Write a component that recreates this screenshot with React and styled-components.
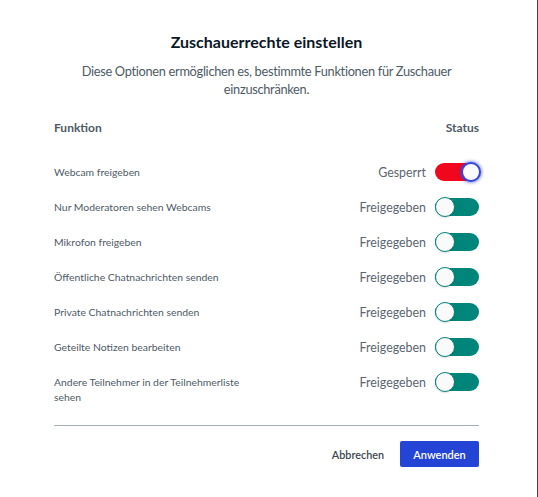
import React from 'react';
import styled, { createGlobalStyle } from 'styled-components';

const Global = createGlobalStyle`
  html, body {
    margin: 0;
    padding: 0;
    background: #ffffff;
  }
  * { box-sizing: border-box; }
`

const Page = styled.div`
  width: 538px;
  height: 497px;
  background: #ffffff;
  border-right: 1px solid #3a4047;
  font-family: "Source Sans Pro", Lato, "Liberation Sans", sans-serif;
  color: #4e5a66;
  padding: 31px 58px 0 54px;
  display: flex;
  flex-direction: column;
`

const Title = styled.h2`
  margin: 0;
  text-align: center;
  font-size: 16px;
  font-weight: 700;
  color: #0b1727;
  line-height: 22px;
`

const Subtitle = styled.p`
  margin: 9px 0 0;
  text-align: center;
  font-size: 12.8px;
  letter-spacing: -0.3px;
  line-height: 18px;
  color: #4e5a66;
`

const HeaderRow = styled.div`
  display: flex;
  justify-content: space-between;
  margin-top: 21px;
  font-size: 12px;
  font-weight: 700;
  color: #4e5a66;
  line-height: 18px;
`

const List = styled.div`
  margin-top: 25px;
  display: flex;
  flex-direction: column;
  gap: 15px;
`

const Row = styled.div`
  display: flex;
  align-items: flex-start;
  justify-content: space-between;
  min-height: 20px;
`

const Label = styled.div`
  font-size: 10.4px;
  line-height: 15px;
  padding-top: 3px;
  max-width: 200px;
  color: #4e5a66;
`

const StatusWrap = styled.div`
  display: flex;
  align-items: center;
  gap: 9px;
  padding-top: 1px;
`

const StatusText = styled.span`
  font-size: 12.4px;
  color: #5b6570;
`

const Track = styled.div`
  position: relative;
  width: 44px;
  height: 18px;
  border-radius: 9px;
  background: ${p => (p.$on ? '#f0061d' : '#00857a')};
`

const Knob = styled.div`
  position: absolute;
  top: -1px;
  left: ${p => (p.$on ? '26px' : '0')};
  width: 20px;
  height: 20px;
  border-radius: 50%;
  background: #fafafa;
  border: ${p => (p.$on ? '2px solid #3447d8' : '1.5px solid #00857a')};
  box-shadow: ${p => (p.$on ? '0 0 3px 1px rgba(52, 71, 216, 0.55)' : '0 1px 2px rgba(0,0,0,0.15)')};
`

const Divider = styled.hr`
  margin: 20px 0 0;
  border: 0;
  border-top: 1px solid #a7aeb5;
`

const Footer = styled.div`
  display: flex;
  justify-content: flex-end;
  align-items: center;
  gap: 16px;
  margin-top: 15px;
`

const Cancel = styled.button`
  background: none;
  border: 0;
  padding: 0;
  font-family: inherit;
  font-size: 10.8px;
  font-weight: 600;
  color: #3c4550;
`

const Apply = styled.button`
  width: 79px;
  height: 26px;
  border: 0;
  border-radius: 2px;
  background: #2444d6;
  color: #ffffff;
  font-family: inherit;
  font-size: 11px;
  font-weight: 600;
`

const items = [
  { label: 'Webcam freigeben', locked: true },
  { label: 'Nur Moderatoren sehen Webcams' },
  { label: 'Mikrofon freigeben' },
  { label: 'Öffentliche Chatnachrichten senden' },
  { label: 'Private Chatnachrichten senden' },
  { label: 'Geteilte Notizen bearbeiten' },
  { label: 'Andere Teilnehmer in der Teilnehmerliste sehen' },
]

function Toggle({ on }) {
  return (
    <Track $on={on}>
      <Knob $on={on} />
    </Track>
  )
}

export default function App() {
  return (
    <Page>
      <Global />
      <Title>Zuschauerrechte einstellen</Title>
      <Subtitle>
        Diese Optionen ermöglichen es, bestimmte Funktionen für Zuschauer einzuschränken.
      </Subtitle>
      <HeaderRow>
        <span>Funktion</span>
        <span>Status</span>
      </HeaderRow>
      <List>
        {items.map(item => (
          <Row key={item.label}>
            <Label>{item.label}</Label>
            <StatusWrap>
              <StatusText>{item.locked ? 'Gesperrt' : 'Freigegeben'}</StatusText>
              <Toggle on={!!item.locked} />
            </StatusWrap>
          </Row>
        ))}
      </List>
      <Divider />
      <Footer>
        <Cancel>Abbrechen</Cancel>
        <Apply>Anwenden</Apply>
      </Footer>
    </Page>
  )
}
